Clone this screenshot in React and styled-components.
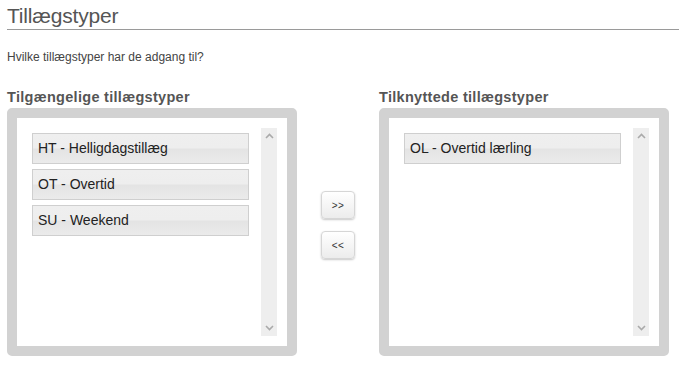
import React, { useState } from "react";
import styled, { createGlobalStyle } from "styled-components";

const GlobalStyle = createGlobalStyle`
  body {
    margin: 0;
    background: #ffffff;
    font-family: "Liberation Sans", Arial, sans-serif;
  }
`;

const Page = styled.div`
  padding: 4px 0 0 7px;
`;

const Title = styled.h1`
  margin: 0;
  padding-bottom: 1px;
  font-size: 21px;
  font-weight: normal;
  line-height: normal;
  letter-spacing: -0.2px;
  color: #555555;
  border-bottom: 1px solid #9a9a9a;
`;

const Intro = styled.p`
  margin: 20px 0 0;
  font-size: 12px;
  color: #444444;
`;

const Row = styled.div`
  display: flex;
  align-items: flex-start;
  margin-top: 25px;
`;

const Column = styled.div`
  display: flex;
  flex-direction: column;
  width: 290px;
`;

const Label = styled.div`
  font-size: 14.5px;
  font-weight: bold;
  letter-spacing: 0.3px;
  color: #555555;
  margin-bottom: 3px;
`;

const Box = styled.div`
  box-sizing: border-box;
  height: 248px;
  border: 10px solid #d2d2d2;
  border-radius: 5px;
  background: #ffffff;
  padding: 10px 10px 10px 15px;
  display: flex;
  gap: 12px;
`;

const List = styled.div`
  flex: 1;
  display: flex;
  flex-direction: column;
  gap: 5px;
  padding-top: 5px;
`;

const Item = styled.div`
  box-sizing: border-box;
  height: 31px;
  padding-left: 5px;
  line-height: 28px;
  font-size: 14px;
  color: #222222;
  border: 1px solid #cfcfcf;
  background: linear-gradient(
    to bottom,
    #efefef 0%,
    #eeeeee 48%,
    #e4e4e4 52%,
    #ebebeb 100%
  );
  cursor: pointer;
  ${({ selected }) => selected && `background: #dcdcdc;`}
`;

const Scrollbar = styled.div`
  width: 16px;
  background: #eeeeee;
  display: flex;
  flex-direction: column;
  justify-content: space-between;
  align-items: center;
  padding: 5px 0;
  box-sizing: border-box;
`;

const Middle = styled.div`
  width: 82px;
  display: flex;
  flex-direction: column;
  align-items: center;
  gap: 12px;
  padding-top: 102px;
`;

const MoveButton = styled.button`
  box-sizing: border-box;
  width: 34px;
  height: 28px;
  padding: 0;
  border: 1px solid #d6d6d6;
  border-radius: 4px;
  background: linear-gradient(to bottom, #ffffff, #ececec);
  box-shadow: 0 1px 2px rgba(0, 0, 0, 0.22);
  font-family: "Liberation Sans", Arial, sans-serif;
  font-size: 10px;
  letter-spacing: 0.5px;
  color: #333333;
  cursor: pointer;
`;

const Chevron = ({ up }) => (
  <svg width="9" height="6" viewBox="0 0 9 6">
    <path
      d={up ? "M1 5 L4.5 1.5 L8 5" : "M1 1 L4.5 4.5 L8 1"}
      fill="none"
      stroke="#aaaaaa"
      strokeWidth="1.6"
    />
  </svg>
);

function Picker({ title, items, selected, onSelect }) {
  return (
    <Column>
      <Label>{title}</Label>
      <Box>
        <List>
          {items.map((item) => (
            <Item
              key={item}
              selected={selected === item}
              onClick={() => onSelect(item)}
            >
              {item}
            </Item>
          ))}
        </List>
        <Scrollbar>
          <Chevron up />
          <Chevron />
        </Scrollbar>
      </Box>
    </Column>
  );
}

export default function App() {
  const [available, setAvailable] = useState([
    "HT - Helligdagstillæg",
    "OT - Overtid",
    "SU - Weekend",
  ]);
  const [linked, setLinked] = useState(["OL - Overtid lærling"]);
  const [selected, setSelected] = useState(null);

  const moveRight = () => {
    if (!available.includes(selected)) return;
    setAvailable(available.filter((i) => i !== selected));
    setLinked([...linked, selected]);
    setSelected(null);
  };

  const moveLeft = () => {
    if (!linked.includes(selected)) return;
    setLinked(linked.filter((i) => i !== selected));
    setAvailable([...available, selected]);
    setSelected(null);
  };

  return (
    <Page>
      <GlobalStyle />
      <Title>Tillægstyper</Title>
      <Intro>Hvilke tillægstyper har de adgang til?</Intro>
      <Row>
        <Picker
          title="Tilgængelige tillægstyper"
          items={available}
          selected={selected}
          onSelect={setSelected}
        />
        <Middle>
          <MoveButton onClick={moveRight}>&gt;&gt;</MoveButton>
          <MoveButton onClick={moveLeft}>&lt;&lt;</MoveButton>
        </Middle>
        <Picker
          title="Tilknyttede tillægstyper"
          items={linked}
          selected={selected}
          onSelect={setSelected}
        />
      </Row>
    </Page>
  );
}
